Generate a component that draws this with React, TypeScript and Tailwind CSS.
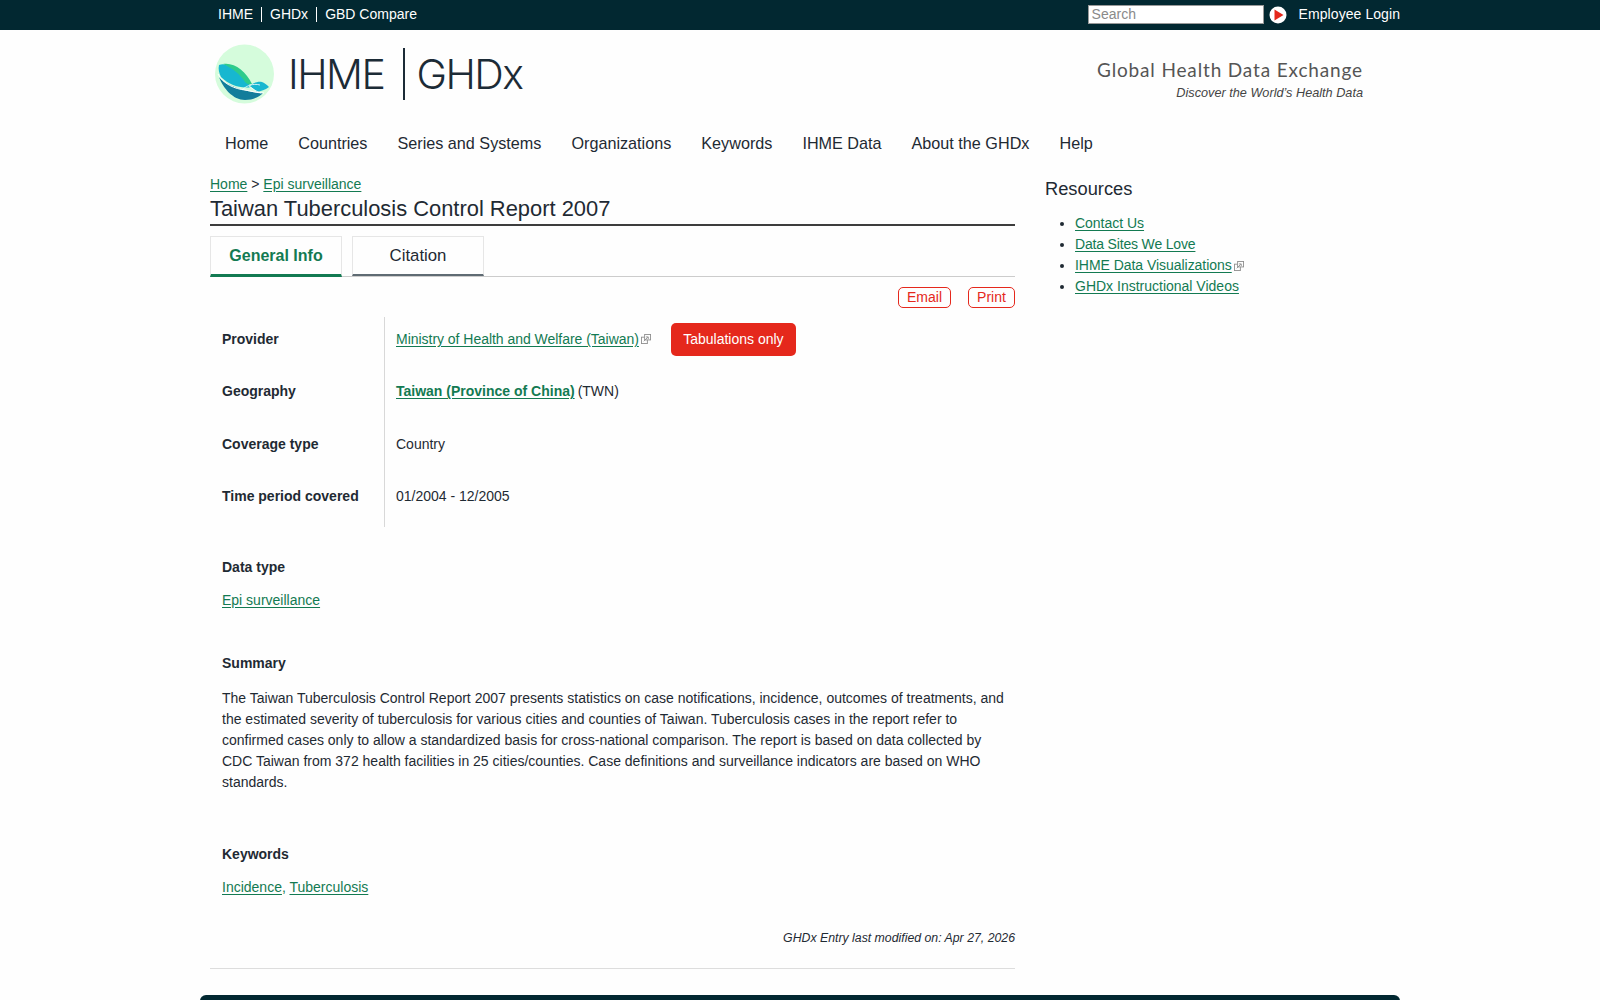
import React from "react";

function Ext() {
  return (
    <svg width="10" height="10" viewBox="0 0 11 11" fill="none" stroke="#8f8f8f" strokeWidth="1" className="inline-block ml-[2px] align-[-1px]">
      <rect x="0.5" y="3.5" width="6.5" height="7" fill="#fefefe" />
      <rect x="4" y="0.5" width="6.5" height="6" fill="#fefefe" />
      <path d="M3 8 L7.5 3.5 M5.5 3.2 H8 V5.5" />
    </svg>
  );
}

function A({ children, className = "" }: { children: React.ReactNode; className?: string }) {
  return <a href="#" className={"text-[#137a52] underline underline-offset-[2px] " + className}>{children}</a>;
}

function Logo() {
  return (
    <svg width="60" height="60" viewBox="0 0 60 60" className="shrink-0">
      <circle cx="29.5" cy="30" r="29.5" fill="#d5fcdc" />
      <path d="M4 33 C8 44 18 56 30 56 C38 56 44 53 48 49 C40 49 30 47 22 44 C14 41 8 38 4 33 Z" fill="#127d9b" />
      <path d="M4 21 C8 19 12 21 14 22 C22 26 30 34 36 43 C26 45 14 41 6 33 C4 29 3 25 4 21 Z" fill="#17b7d0" />
      <path d="M8 20 C19 18 31 27 37 40 C34 41 32 40 30 38 C25 30 17 24 8 20 Z" fill="#2ecb8b" />
      <path d="M35 42 C38 39 43 37 47 38 C50 39 52 41 54 43 C50 46 46 47 42 48 C40 46 37 44 35 42 Z" fill="#17b7d0" />
      <path d="M3 30 C8 40 20 45 30 46 C36 47 42 49 49 49" fill="none" stroke="#fff" strokeWidth="1" />
      <path d="M27 46 C31 42 38 39 45 41" fill="none" stroke="#fff" strokeWidth="0.8" />
      <path d="M34 42 C38 45 42 48 46 49" fill="none" stroke="#fff" strokeWidth="0.8" />
    </svg>
  );
}

function Row({ label, children }: { label: string; children: React.ReactNode }) {
  return (
    <div className="flex h-[52.4px]">
      <div className="flex w-[174px] shrink-0 items-center pb-[7.6px] pl-3 font-bold text-[14px] text-[#1f2a33]">{label}</div>
      <div className="flex flex-1 items-center border-l border-[#d8d8d8] pb-[7.6px] pl-[11px] text-[14px]">{children}</div>
    </div>
  );
}

export default function App() {
  return (
    <div className="h-screen overflow-hidden bg-[#fefefe] text-[#1f2a33] text-[14px] font-['Liberation_Sans',Arial,sans-serif]">
      <div className="h-[30px] bg-[#022831] text-white">
        <div className="mx-auto flex h-full w-[1200px] items-center justify-between pb-[1px] pl-[18px] text-[14px]">
          <div className="flex items-center">
            <span className="pr-[8px] leading-[15px] border-r border-white">IHME</span>
            <span className="px-[8px] leading-[15px] border-r border-white">GHDx</span>
            <span className="pl-[8px] leading-[15px]">GBD Compare</span>
          </div>
          <div className="flex items-center">
            <input placeholder="Search" className="h-[19px] w-[176px] border border-[#999] bg-white px-[3px] text-[14px] text-[#333] placeholder:text-[#8a8a8a]" />
            <svg width="18" height="18" viewBox="0 0 18 18" className="ml-[5px]">
              <circle cx="9" cy="9" r="8.5" fill="#fff" />
              <path d="M5.5 3.5 L14.5 9 L5.5 14.5 Z" fill="#e5281c" />
            </svg>
            <span className="ml-[12px] tracking-[0.07px]">Employee Login</span>
          </div>
        </div>
      </div>

      <div className="mx-auto w-[1200px]">
        <div className="flex h-[88px] items-center justify-between pl-[15px] pr-[37px]">
          <div className="flex items-center">
            <Logo />
            <span className="ml-[13px] pt-[1px] text-[41px] font-['Inter',sans-serif] font-light tracking-[-1.5px] text-[#1c2b36]">IHME</span>
            <span className="ml-[19px] mr-[11px] h-[52px] w-[2px] bg-[#1c2b36]" />
            <span className="pt-[1px] text-[41px] font-['Inter',sans-serif] font-light tracking-[-1.5px] text-[#1c2b36]">GHDx</span>
          </div>
          <div className="pt-[13px] text-right">
            <div className="text-[19px] leading-[24px] tracking-[0.85px] text-[#555] font-['Lato',sans-serif]">Global Health Data Exchange</div>
            <div className="mt-[2px] text-[12.7px] italic text-[#444]">Discover the World’s Health Data</div>
          </div>
        </div>

        <nav className="flex h-[51px] items-center gap-[30px] pl-[25px] text-[16.2px] text-[#1f2a33]">
          <span>Home</span>
          <span>Countries</span>
          <span>Series and Systems</span>
          <span>Organizations</span>
          <span>Keywords</span>
          <span>IHME Data</span>
          <span>About the GHDx</span>
          <span>Help</span>
        </nav>

        <div className="flex pl-[10px]">
          <main className="w-[805px]">
            <div className="mt-[6px] leading-[18px]"><A>Home</A> &gt; <A>Epi surveillance</A></div>
            <h1 className="mt-[1px] border-b-2 border-[#3d3d3d] text-[21.9px] leading-[30px] font-normal">Taiwan Tuberculosis Control Report 2007</h1>

            <div className="mt-[10px] flex h-[41px] gap-[10px] border-b border-[#cccccc]">
              <div className="flex h-[41px] w-[132px] items-center justify-center border border-[#e6e6e6] border-b-[3px] border-b-[#137a52] text-[16px] font-bold text-[#137a52]">General Info</div>
              <div className="flex h-[40px] w-[132px] items-center justify-center border border-[#e6e6e6] border-b-[2px] border-b-[#5f6b73] text-[16.8px]">Citation</div>
            </div>

            <div className="mt-[10px] flex justify-end gap-[17px] text-[14px] text-[#e5281c]">
              <span className="flex h-[21px] w-[53px] items-center justify-center rounded-[5px] border border-[#e5281c]">Email</span>
              <span className="flex h-[21px] w-[47px] items-center justify-center rounded-[5px] border border-[#e5281c]">Print</span>
            </div>

            <div className="mt-[9px]">
              <Row label="Provider">
                <A className="tracking-[-0.03px]">Ministry of Health and Welfare (Taiwan)</A><Ext />
                <span className="ml-[20px] flex h-[33px] w-[125px] items-center justify-center rounded-[5px] bg-[#e5281c] text-white">Tabulations only</span>
              </Row>
              <Row label="Geography"><A className="font-bold">Taiwan (Province of China)</A><span className="ml-[3px]">(TWN)</span></Row>
              <Row label="Coverage type">Country</Row>
              <Row label="Time period covered">01/2004 - 12/2005</Row>
            </div>

            <div className="mt-[31px] pl-3 font-bold leading-[18px]">Data type</div>
            <div className="mt-[15px] pl-3 leading-[18px]"><A>Epi surveillance</A></div>

            <div className="mt-[45px] pl-3 font-bold leading-[18px]">Summary</div>
            <p className="mt-[16px] pl-3 pr-2 leading-[21px]">
              The Taiwan Tuberculosis Control Report 2007 presents statistics on case notifications, incidence, outcomes of treatments, and the estimated severity of tuberculosis for various cities and counties of Taiwan. Tuberculosis cases in the report refer to confirmed cases only to allow a standardized basis for cross-national comparison. The report is based on data collected by CDC Taiwan from 372 health facilities in 25 cities/counties. Case definitions and surveillance indicators are based on WHO standards.
            </p>

            <div className="mt-[52px] pl-3 font-bold leading-[18px]">Keywords</div>
            <div className="mt-[15px] pl-3 leading-[18px]"><A>Incidence</A><span className="text-[#137a52]">, </span><A>Tuberculosis</A></div>

            <div className="mt-[33px] text-right text-[12.3px] italic leading-[18px]">GHDx Entry last modified on: Apr 27, 2026</div>
            <div className="mt-[21px] border-b border-[#dddddd]" />
          </main>

          <aside className="ml-[30px] flex-1">
            <h2 className="mt-[8px] text-[18.3px] leading-[24px] font-normal">Resources</h2>
            <ul className="mt-[12px] list-disc pl-[30px] leading-[21px] marker:text-[#1f2a33]">
              <li><A className="tracking-[-0.02px]">Contact Us</A></li>
              <li><A className="tracking-[-0.17px]">Data Sites We Love</A></li>
              <li><A className="tracking-[-0.04px]">IHME Data Visualizations</A><Ext /></li>
              <li><A>GHDx Instructional Videos</A></li>
            </ul>
          </aside>
        </div>

        <footer className="mt-[26px] h-[60px] rounded-t-[6px] bg-[#022831]" />
      </div>
    </div>
  );
}
